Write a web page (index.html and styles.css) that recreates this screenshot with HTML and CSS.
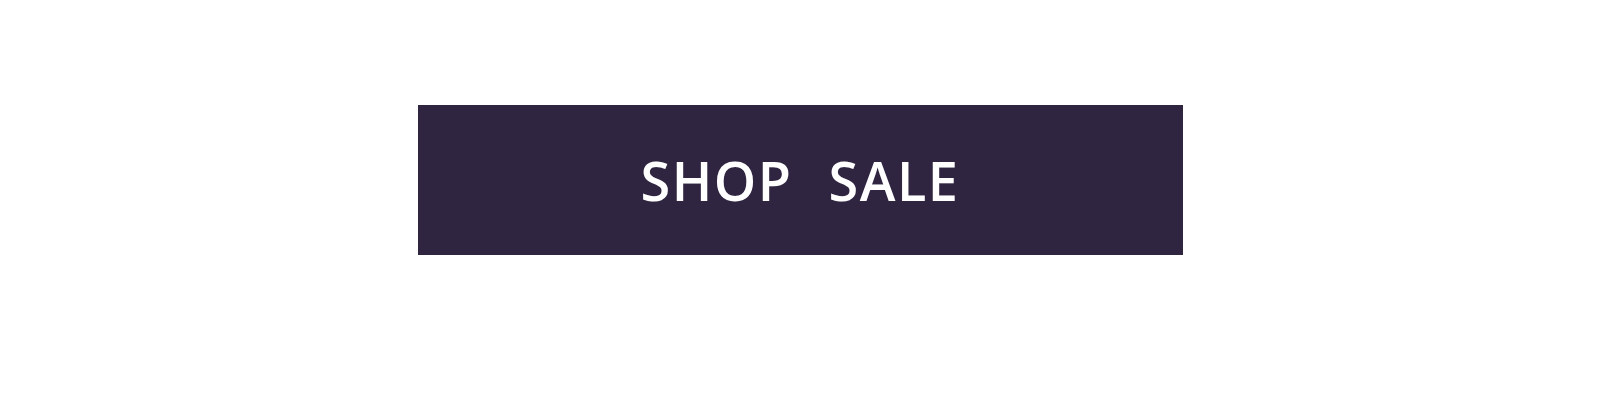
FILE: index.html
```html
<!DOCTYPE html>
<html lang="en">
<head>
<meta charset="utf-8">
<title>Shop Sale</title>
<link rel="stylesheet" href="styles.css">
</head>
<body>
  <section class="promo">
    <a class="promo-button" href="#">
      <span class="promo-word">SHOP</span>
      <span class="promo-word">SALE</span>
    </a>
  </section>
</body>
</html>
```

FILE: styles.css
```css
html, body {
  margin: 0;
  padding: 0;
  background: #ffffff;
}

.promo {
  display: flex;
  justify-content: center;
  padding-top: 105px;
  height: 418px;
  box-sizing: border-box;
}

.promo-button {
  display: flex;
  align-items: center;
  justify-content: center;
  gap: 36px;
  width: 765px;
  height: 150px;
  background: #2f2541;
  color: #ffffff;
  text-decoration: none;
  box-sizing: border-box;
}

.promo-word {
  font-family: "Open Sans", "Noto Sans", sans-serif;
  font-weight: 600;
  font-size: 54px;
  letter-spacing: 1.5px;
  line-height: 1;
}
```
